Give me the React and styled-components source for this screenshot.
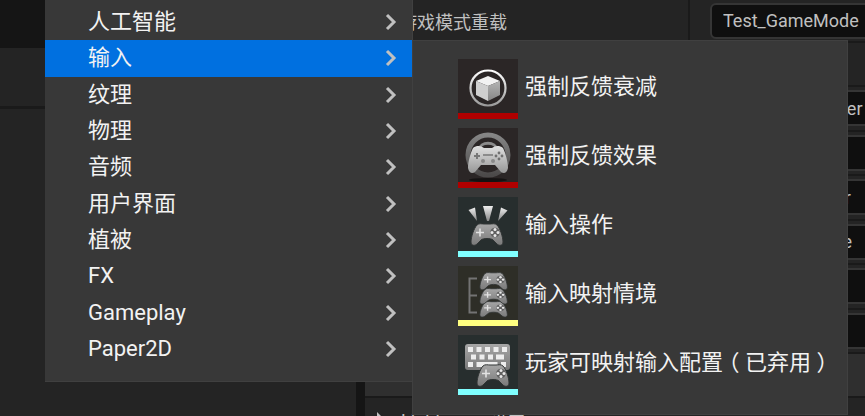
import React from 'react';
import styled, { createGlobalStyle } from 'styled-components';

const GlobalStyle = createGlobalStyle`
  * { box-sizing: border-box; }
  body {
    margin: 0;
    background: #242424;
    color: #c0c0c0;
    font-family: Roboto, "Noto Sans CJK SC", sans-serif;
    overflow: hidden;
  }
`;

const Editor = styled.div`
  position: relative;
  display: flex;
  min-height: 100vh;
  overflow: hidden;
  background: #151515;
`;

const Outliner = styled.aside`
  flex: 0 0 356px;
  display: flex;
  flex-direction: column;
  margin-right: 9px;
`;

const OutlinerBar = styled.div`
  height: 48px;
  background: #151515;
`;

const OutlinerTools = styled.div`
  height: 61px;
  background: #242424;
  border-bottom: 3px solid #1a1a1a;
`;

const OutlinerBody = styled.div`
  flex: 1;
  background: #242424;
`;

const Details = styled.main`
  flex: 1;
  min-width: 0;
  height: 100vh;
  overflow: hidden;
  background: #242424;
`;

const PropertyList = styled.div`
  display: grid;
  grid-template-rows: repeat(6, 1fr);
  height: 267px;
`;

const Property = styled.label`
  display: grid;
  grid-template-columns: 325px 1fr;
  min-height: 43px;
  border-bottom: 2px solid #1a1a1a;
  font-size: 18px;
`;

const PropertyName = styled.span`
  display: flex;
  align-items: center;
  padding-left: 34px;
  border-right: 2px solid #1a1a1a;
`;

const PropertyValue = styled.div`
  display: flex;
  align-items: center;
  padding-left: 20px;
  overflow: hidden;
`;

const ValueInput = styled.input`
  flex: 0 0 240px;
  height: 36px;
  padding: 0 11px;
  border: 2px solid #353535;
  border-radius: 6px;
  background: #0f0f0f;
  color: #c0c0c0;
  font: inherit;
`;

const Category = styled.h2`
  display: flex;
  align-items: center;
  gap: 16px;
  height: 44px;
  margin: 0;
  padding-left: 10px;
  border-bottom: 2px solid #1a1a1a;
  background: ${(p) => (p.$plain ? '#242424' : '#2f2f2f')};
  font-size: 18px;
  font-weight: ${(p) => (p.$plain ? 400 : 700)};
`;

const Expander = styled.svg`
  width: 10px;
  height: 14px;
  fill: #c0c0c0;
`;

const Menu = styled.nav`
  position: absolute;
  left: 45px;
  top: 0;
  width: 368px;
  padding: 4px 0 14px;
  background: #383838;
  border: 1px solid #404040;
  border-width: 0 1px 1px 0;
`;

const MenuList = styled.div`
  display: grid;
  grid-auto-rows: 1fr;
  height: 363px;
`;

const MenuItem = styled.button`
  display: flex;
  align-items: center;
  justify-content: space-between;
  padding: 0 15px 0 43px;
  border: 0;
  background: ${(p) => (p.$active ? '#0070e0' : 'transparent')};
  color: #f2f2f2;
  font: inherit;
  font-size: 22px;
  line-height: 32px;
  text-align: left;
`;

const Chevron = styled.svg`
  width: 12px;
  height: 18px;
  fill: none;
  stroke: #c0c0c0;
  stroke-width: 3;
`;

const Submenu = styled.nav`
  position: absolute;
  left: 412px;
  top: 40px;
  width: 436px;
  display: flex;
  flex-direction: column;
  gap: 9px;
  padding: 18px 0 19px 45px;
  background: #383838;
  border: 1px solid #404040;
`;

const AssetItem = styled.button`
  display: flex;
  align-items: center;
  gap: 7px;
  height: 60px;
  padding: 0;
  border: 0;
  background: transparent;
  color: #f2f2f2;
  font: inherit;
  font-size: 22px;
  line-height: 32px;
  white-space: nowrap;
  text-align: left;
`;

const AssetLabel = styled.span`
  padding-bottom: 4px;
`;

const Bracket = styled.span`
  display: inline-block;
  width: 22px;
  text-align: center;
  font-feature-settings: "halt";
`;

const Thumbnail = styled.span`
  width: 60px;
  height: 60px;
  background: ${(p) => p.$tint};
  border-bottom: 6px solid ${(p) => p.$accent};
`;

const Art = styled.svg`
  display: block;
  width: 60px;
  height: 54px;
`;

const PAD =
  'M7 2C9 0 12 1 14 1H20C22 1 25 0 27 2C30 5 33 14 33 19C33 23 29 23 27 21L23 17C21 15 13 15 11 17L7 21C5 23 1 23 1 19C1 14 4 5 7 2Z';

function Gamepad({ transform }) {
  return (
    <g transform={transform}>
      <path d={PAD} fill="url(#metal)" stroke="#303434" strokeWidth="1" />
      <path d="M6 9.5H14M10 5.5V13.5" stroke="#e2e2e2" strokeWidth="1.6" />
      <circle cx="25" cy="9.5" r="4.8" fill="#606060" />
      <g fill="#e8e8e8">
        <circle cx="25" cy="6.5" r="1.5" />
        <circle cx="22" cy="9.5" r="1.5" />
        <circle cx="28" cy="9.5" r="1.5" />
        <circle cx="25" cy="12.5" r="1.5" />
      </g>
    </g>
  );
}

function AttenuationArt() {
  return (
    <>
      <circle cx="30" cy="29" r="17.5" fill="none" stroke="url(#ring)" strokeWidth="2.2" />
      <path d="M30 17L42 22L30 27L18 22Z" fill="#f2f2f2" />
      <path d="M18 22L30 27V42L18 36Z" fill="#cfcfcf" />
      <path d="M42 22L30 27V42L42 36Z" fill="url(#shade)" />
    </>
  );
}

function ForceFeedbackArt() {
  return (
    <>
      <ellipse cx="30" cy="52" rx="19" ry="2" fill="#151313" />
      <circle cx="30" cy="27" r="20" fill="none" stroke="url(#wheel)" strokeWidth="5" />
      <path d="M21 22C22 13 38 13 39 22" fill="none" stroke="#8b8b8b" strokeWidth="3" />
      <path
        d="M15 20C19 17 23 18 26 20H34C37 18 41 17 45 20C47 24 50 33 50 40C49 45 46 46 43 44L37 37H23L17 44C14 46 11 45 10 40C10 33 13 24 15 20Z"
        fill="url(#bright)"
      />
      <rect x="25" y="26" width="10" height="2" fill="#8b8b8b" />
      <path d="M16 28H22M19 25V31" stroke="#777" strokeWidth="2" />
      <g fill="#707070">
        <circle cx="41" cy="25" r="1.4" />
        <circle cx="38" cy="28" r="1.4" />
        <circle cx="44" cy="28" r="1.4" />
        <circle cx="41" cy="31" r="1.4" />
      </g>
      <circle cx="25" cy="33" r="2" fill="#888" />
      <circle cx="35" cy="33" r="2" fill="#888" />
    </>
  );
}

function ActionArt() {
  return (
    <>
      <path d="M10.5 13L17 10.5L19 24Z" fill="url(#ray)" />
      <path d="M25 9H35L31 24H29Z" fill="url(#ray)" />
      <path d="M43 10.5L49.5 13.5L40 24Z" fill="url(#ray)" />
      <Gamepad transform="translate(12 26)" />
    </>
  );
}

function MappingArt() {
  return (
    <>
      <path d="M19 12.5H11.5V46.5H19M11.5 29.5H19" fill="none" stroke="#737373" strokeWidth="2" />
      <Gamepad transform="translate(21 35) scale(.86 .72)" />
      <Gamepad transform="translate(21 22) scale(.86 .72)" />
      <Gamepad transform="translate(21 6) scale(.86 .8)" />
    </>
  );
}

function KeyboardArt() {
  const keys = [
    [10, 12], [18.5, 12], [27, 12], [35.5, 12], [44, 12],
    [13, 19.5], [21.5, 19.5], [30, 19.5], [10, 27], [43, 27],
  ];
  return (
    <>
      <rect x="7" y="9" width="45" height="26" rx="3" fill="url(#metal)" />
      {keys.map(([x, y]) => (
        <rect key={`${x}-${y}`} x={x} y={y} width="5" height="5" fill="#ededed" />
      ))}
      <rect x="38" y="19.5" width="8" height="5" fill="#ededed" />
      <rect x="18.5" y="27" width="21" height="5" fill="#ededed" />
      <Gamepad transform="translate(18 29)" />
    </>
  );
}

const categories = ['人工智能', '输入', '纹理', '物理', '音频', '用户界面', '植被', 'FX', 'Gameplay', 'Paper2D'];

const assets = [
  { label: '强制反馈衰减', tint: '#2b2626', accent: '#b00000', Drawing: AttenuationArt },
  { label: '强制反馈效果', tint: '#2b2626', accent: '#b00000', Drawing: ForceFeedbackArt },
  { label: '输入操作', tint: '#272e2e', accent: '#80ffff', Drawing: ActionArt },
  { label: '输入映射情境', tint: '#2e2e27', accent: '#ffff80', Drawing: MappingArt },
  { label: '玩家可映射输入配置', note: '已弃用', tint: '#272e2e', accent: '#80ffff', Drawing: KeyboardArt },
];

const properties = ['Gamer_Character', '', 'PlayerController', 'GameStateBase', '', ''];

function Gradient({ id, from, to }) {
  return (
    <linearGradient id={id} x2="0" y2="1">
      <stop stopColor={from} />
      <stop offset="1" stopColor={to} />
    </linearGradient>
  );
}

function Gradients() {
  return (
    <defs>
      <Gradient id="metal" from="#a6a6a6" to="#7a7a7a" />
      <Gradient id="bright" from="#e0e0e0" to="#979797" />
      <Gradient id="ring" from="#ffffff" to="#9a9a9a" />
      <Gradient id="ray" from="#eeeeee" to="#858585" />
      <Gradient id="wheel" from="#858585" to="#4c4a4a" />
      <Gradient id="shade" from="#b4b4b4" to="#858585" />
    </defs>
  );
}

export default function App() {
  return (
    <Editor>
      <GlobalStyle />
      <Outliner>
        <OutlinerBar />
        <OutlinerTools />
        <OutlinerBody />
      </Outliner>
      <Details>
        <Property>
          <PropertyName>游戏模式重载</PropertyName>
          <PropertyValue><ValueInput defaultValue="Test_GameMode" /></PropertyValue>
        </Property>
        <Category as="div" $plain />
        <PropertyList>
          {properties.map((value, i) => (
            <Property key={i}>
              <PropertyName />
              <PropertyValue><ValueInput aria-label="类" defaultValue={value} /></PropertyValue>
            </Property>
          ))}
        </PropertyList>
        <Category>
          <Expander viewBox="0 0 10 14"><path d="M0 4H10L5 11Z" /></Expander>
          Lightmass
        </Category>
        <Category $plain>
          <Expander viewBox="0 0 10 14"><path d="M2 0L9 7L2 14Z" /></Expander>
          Lightmass 设置
        </Category>
      </Details>
      <Menu>
        <MenuList>
          {categories.map((name) => (
            <MenuItem key={name} type="button" $active={name === '输入'}>
              {name}
              <Chevron viewBox="0 0 12 18"><path d="M2 2L9 9L2 16" /></Chevron>
            </MenuItem>
          ))}
        </MenuList>
      </Menu>
      <Submenu>
        {assets.map(({ label, note, tint, accent, Drawing }) => (
          <AssetItem key={label} type="button">
            <Thumbnail $tint={tint} $accent={accent}>
              <Art viewBox="0 0 60 54"><Gradients /><Drawing /></Art>
            </Thumbnail>
            <AssetLabel>
              {label}
              {note && <><Bracket>（</Bracket>{note}<Bracket>）</Bracket></>}
            </AssetLabel>
          </AssetItem>
        ))}
      </Submenu>
    </Editor>
  );
}
